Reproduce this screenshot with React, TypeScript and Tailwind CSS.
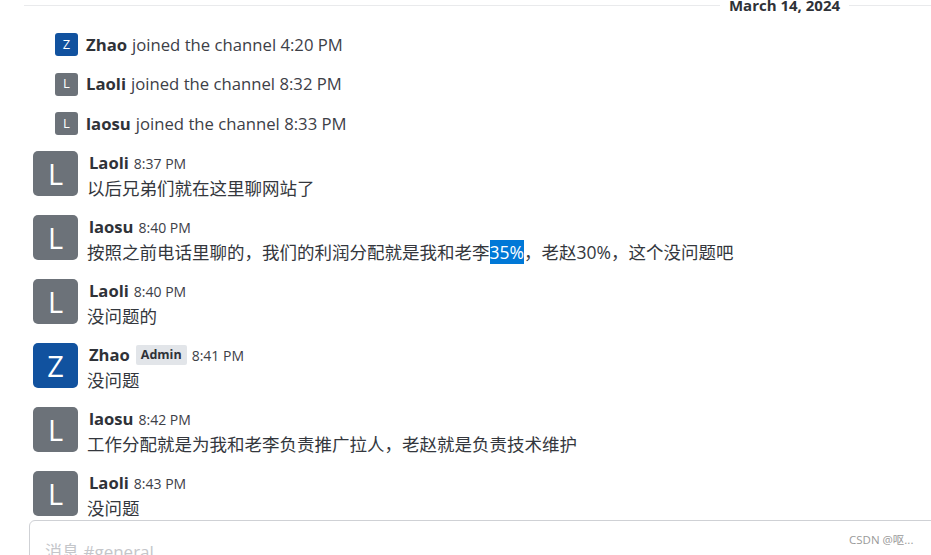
const FONT = "font-['Open_Sans','Noto_Sans_CJK_SC',sans-serif]";

const AVATAR_COLORS: Record<string, string> = {
  Zhao: "bg-[#11529f]",
  Laoli: "bg-[#6c7279]",
  laosu: "bg-[#6c7279]",
};

const joins = [
  { user: "Zhao", time: "4:20 PM" },
  { user: "Laoli", time: "8:32 PM" },
  { user: "laosu", time: "8:33 PM" },
];

const messages = [
  { user: "Laoli", time: "8:37 PM", text: "以后兄弟们就在这里聊网站了" },
  {
    user: "laosu",
    time: "8:40 PM",
    text: (
      <>
        按照之前电话里聊的，我们的利润分配就是我和老李
        <span className="bg-[#0078d7] text-white">35%</span>
        ，老赵30%，这个没问题吧
      </>
    ),
  },
  { user: "Laoli", time: "8:40 PM", text: "没问题的" },
  { user: "Zhao", time: "8:41 PM", text: "没问题", admin: true },
  { user: "laosu", time: "8:42 PM", text: "工作分配就是为我和老李负责推广拉人，老赵就是负责技术维护" },
  { user: "Laoli", time: "8:43 PM", text: "没问题" },
];

function Avatar({ user, small }: { user: string; small?: boolean }) {
  return (
    <div
      className={`flex shrink-0 items-center justify-center text-white ${AVATAR_COLORS[user]} ${
        small ? "h-[23px] w-[23px] rounded-[3px] text-[13px]" : "h-[45px] w-[45px] rounded-[5px] text-[29px]"
      }`}
    >
      {user[0].toUpperCase()}
    </div>
  );
}

export default function App() {
  return (
    <div className={`relative flex h-[555px] w-[931px] flex-col overflow-hidden bg-white text-[#2f3238] ${FONT}`}>
      <div className="h-[520px] shrink-0 overflow-hidden">
        <div className="flex h-[11px] items-center pl-6">
          <div className="h-px w-[696px] bg-[#e9eaec]" />
          <span className="w-[129px] text-center text-[15px] leading-[11px] font-bold whitespace-nowrap">March 14, 2024</span>
          <div className="h-px flex-1 bg-[#e9eaec]" />
        </div>
        <div className="mt-[22px] flex flex-col gap-[16.5px] pl-[55px]">
          {joins.map((j) => (
            <div key={j.user} className="flex h-[23px] items-center text-[16.7px] whitespace-nowrap">
              <Avatar user={j.user} small />
              <span className="ml-2 font-bold">{j.user}</span>
              <span className="ml-[5px] text-[#3d4047]">joined the channel {j.time}</span>
            </div>
          ))}
        </div>
        <div className="mt-[16px] flex flex-col gap-[19px] pl-[33px]">
          {messages.map((m, i) => (
            <div key={i} className="flex h-[45px] gap-[9px]">
              <Avatar user={m.user} />
              <div className="min-w-0">
                <div className="flex h-[24px] items-center gap-[4px] pl-[2px] whitespace-nowrap">
                  <span className="text-[16.6px] font-bold">{m.user}</span>
                  {m.admin && (
                    <span className="ml-[2px] rounded-[2px] bg-[#e2e5e9] px-[5px] text-[12.5px] leading-[20px] font-bold">Admin</span>
                  )}
                  <span className="ml-[1px] text-[14px] text-[#3d4047]">{m.time}</span>
                </div>
                <div className="text-[17.5px] leading-[27px] whitespace-nowrap text-[#34373d]">{m.text}</div>
              </div>
            </div>
          ))}
        </div>
      </div>
      <div className="ml-[29px] h-[60px] w-[960px] shrink-0 rounded-tl-[6px] border border-[#cfd1d5] bg-white pt-[18px] pl-[15px] text-[17px] text-[#c4c6ca]">
        消息 #general
      </div>
      <span className="absolute top-[531px] left-[849px] text-[11.5px] whitespace-nowrap text-[#9a9a9a]">CSDN @呕...</span>
    </div>
  );
}
